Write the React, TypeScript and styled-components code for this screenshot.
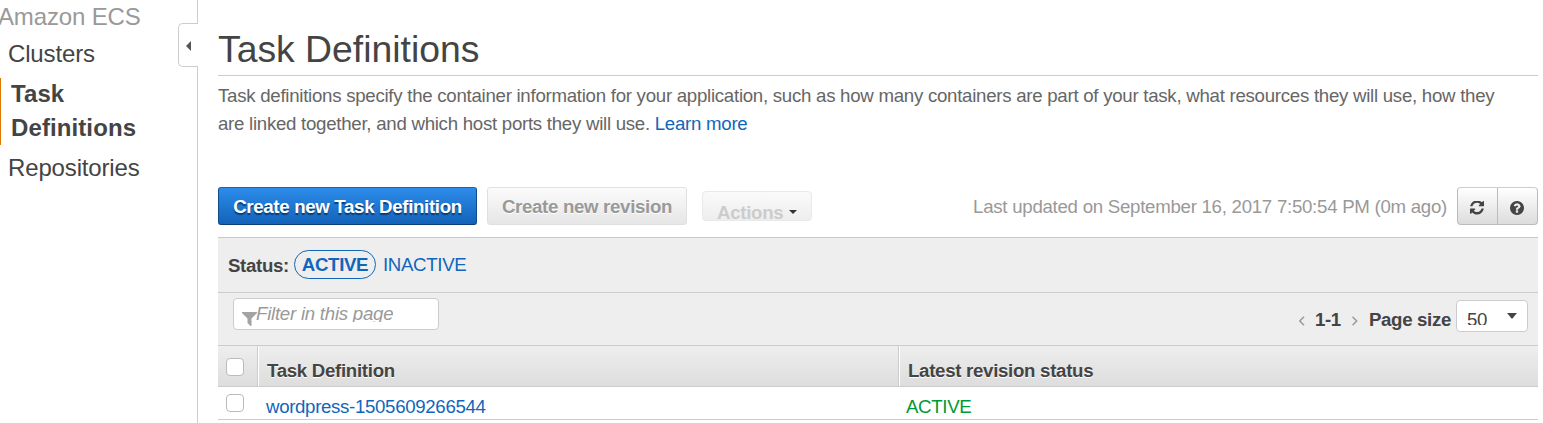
import React from "react";
import styled, { createGlobalStyle, css } from "styled-components";

const Global = createGlobalStyle`
  * { box-sizing: border-box; }
  html, body { margin: 0; background: #fff; overflow: hidden; }
  body {
    font-family: "Liberation Sans", Arial, sans-serif;
    font-size: 18.67px;
    letter-spacing: -0.33px;
    color: #444;
  }
`;

const Page = styled.div`
  display: flex;
  width: 1543px;
  height: 423px;
  overflow: hidden;
`;

const Sidebar = styled.nav`
  position: relative;
  flex: none;
  width: 198px;
  border-right: 1px solid #ccc;
  font-size: 24px;
  line-height: 34px;
  letter-spacing: -0.15px;
`;

const Service = styled.div`
  margin-left: -2px;
  color: #999;
  white-space: nowrap;
`;

const NavItem = styled.a<{ $active?: boolean }>`
  display: block;
  margin-top: 3px;
  padding-left: 8px;
  color: #444;
  ${(p) =>
    p.$active &&
    css`
      display: flow-root;
      width: 160px;
      margin: 7px 0 6px;
      height: 67px;
      padding-left: 10px;
      border-left: 1px solid #e07700;
      line-height: 34px;
      font-weight: bold;
      letter-spacing: 0.1px;
      span {
        display: block;
        margin-top: -1px;
      }
    `}
`;

const CollapseTab = styled.button`
  position: absolute;
  top: 23px;
  right: -1px;
  display: flex;
  align-items: center;
  width: 20px;
  height: 44px;
  padding: 2px 0 0 7px;
  border: 1px solid #ccc;
  border-right: 0;
  border-radius: 5px 0 0 5px;
  background: #fff;
`;

const Main = styled.main`
  flex: 1;
  min-width: 0;
  padding: 25px 5px 0 20px;
`;

const Title = styled.h1`
  margin: 0;
  height: 51px;
  border-bottom: 1px solid #ccc;
  font-size: 37.33px;
  font-weight: normal;
  letter-spacing: 0;
  line-height: 48px;
`;

const Description = styled.p`
  margin: 6px 0 0;
  max-width: 1295px;
  height: 105px;
  letter-spacing: -0.27px;
  line-height: 28px;
  color: #666;
`;

const Link = styled.a`
  color: #1166bb;
`;

const Toolbar = styled.div`
  display: flex;
  align-items: flex-start;
  height: 50px;
`;

const Button = styled.button<{ $primary?: boolean; $width: number }>`
  width: ${(p) => p.$width}px;
  height: 38px;
  margin-right: 10px;
  padding: 1px 0 0;
  border: 1px solid #e0e0e0;
  border-radius: 3px;
  background: linear-gradient(#fbfbfb, #e6e6e6);
  color: #999;
  font: bold 18.67px "Liberation Sans", Arial, sans-serif;
  letter-spacing: -0.32px;
  white-space: nowrap;
  text-shadow: 0 1px 0 #fff;
  ${(p) =>
    p.$primary &&
    css`
      border-color: #1a66b0 #0f4c8a #0b3f75;
      background: linear-gradient(#2d8ceb, #1263b8);
      color: #fff;
      text-shadow: 0 2px 1px #0a3d73;
    `}
`;

const ActionsButton = styled.button`
  display: flex;
  align-items: flex-start;
  gap: 6px;
  width: 110px;
  height: 30px;
  margin: 4px 0 0 5px;
  padding: 10px 0 0 14px;
  border: 1px solid #e9e9e9;
  border-radius: 4px;
  background: linear-gradient(#fafafa, #eee);
  color: #ccc;
  font: bold 18.67px/22px "Liberation Sans", Arial, sans-serif;
  letter-spacing: -0.3px;
`;

const Caret = styled.span`
  margin-top: 8px;
  border: 4px solid transparent;
  border-top-color: #333;
  border-bottom: 0;
`;

const Updated = styled.span`
  margin: 0 10px 0 auto;
  line-height: 39px;
  color: #999;
  letter-spacing: -0.27px;
  white-space: nowrap;
`;

const IconGroup = styled.div`
  display: flex;
  width: 81px;
  height: 38px;
  border: 1px solid #bbb;
  border-top-color: #ccc;
  border-radius: 4px;
  background: linear-gradient(#fff, #dcdcdc);
`;

const IconButton = styled.button`
  flex: 1;
  display: flex;
  align-items: center;
  justify-content: center;
  padding: 4px 1px 0 0;
  border: 0;
  background: none;
  & + & {
    border-left: 1px solid #bbb;
  }
`;

const StatusBar = styled.div`
  display: flex;
  height: 55px;
  padding: 12px 0 0 10px;
  border-top: 1px solid #c8c8c8;
  background: #eee;
  line-height: 29px;
`;

const StatusLabel = styled.b`
  width: 66px;
  padding-top: 1px;
`;

const ActivePill = styled.a`
  width: 82px;
  height: 29px;
  margin-right: 7px;
  border: 1px solid #1166bb;
  border-radius: 15px;
  color: #1166bb;
  font-weight: bold;
  line-height: 27px;
  text-align: center;
`;

const FilterBar = styled.div`
  display: flex;
  align-items: flex-start;
  height: 53px;
  padding: 5px 10px 0 15px;
  border-top: 1px solid #ccc;
  background: #eee;
`;

const FilterField = styled.div`
  display: flex;
  width: 206px;
  height: 32px;
  padding-left: 8px;
  border: 1px solid #ccc;
  border-radius: 4px;
  background: #fff;
  svg {
    flex: none;
    margin: 12px -1px 0 0;
  }
`;

const Placeholder = styled.span`
  height: 18px;
  margin-top: 5px;
  color: #999;
  font-style: italic;
  letter-spacing: -0.25px;
  line-height: 20px;
  overflow: hidden;
  white-space: nowrap;
`;

const Pager = styled.div`
  display: flex;
  align-items: flex-start;
  margin-left: auto;
  font-weight: bold;
  line-height: 43px;
  white-space: nowrap;
  svg {
    margin-top: 18px;
  }
`;

const PageRange = styled.span`
  margin: 0 11px 0 10px;
`;

const PageLabel = styled.span`
  margin: 0 5px 0 11px;
`;

const PageSelect = styled.div`
  display: flex;
  justify-content: space-between;
  width: 72px;
  height: 32px;
  margin-top: 2px;
  padding: 0 10px 0 10px;
  border: 1px solid #ccc;
  border-radius: 4px;
  background: #fff;
  font-weight: normal;
  svg {
    margin-top: 12px;
  }
`;

const PageValue = styled.span`
  height: 14px;
  margin-top: 10px;
  line-height: 18px;
  overflow: hidden;
`;

const Row = styled.div<{ $head?: boolean }>`
  display: grid;
  grid-template-columns: 39px 641px 1fr;
  grid-template-rows: 100%;
  height: 33px;
  border-bottom: 1px solid #ccc;
  ${(p) =>
    p.$head &&
    css`
      height: 42px;
      border-top: 1px solid #ccc;
      background: linear-gradient(#eee, #ddd);
      font-weight: bold;
      letter-spacing: -0.3px;
      text-shadow: 0 1px 0 #fff;
    `}
`;

const HeadCell = styled.div`
  padding: 14px 0 0 9px;
  border-left: 1px solid #ccc;
  box-shadow: inset 1px 0 0 #fff;
  line-height: 21px;
`;

const Cell = styled.div<{ $ok?: boolean }>`
  padding: 9px 0 0 ${(p) => (p.$ok ? 8 : 9)}px;
  line-height: 21px;
  color: ${(p) => (p.$ok ? "#009933" : "#1166bb")};
`;

const Check = styled.span<{ $top: number }>`
  width: 18px;
  height: 18px;
  margin: ${(p) => p.$top}px 0 0 8px;
  border: 1px solid #bbb;
  border-radius: 4px;
  background: #fff;
`;

const RefreshIcon = () => (
  <svg width="14" height="14" viewBox="0 64 1536 1536" fill="#444">
    <path d="M1511 928q0 5-1 7-64 268-268 434.5t-478 166.5q-146 0-282.5-55t-243.5-157l-129 129q-19 19-45 19t-45-19-19-45v-448q0-26 19-45t45-19h448q26 0 45 19t19 45-19 45l-137 137q71 66 161 102t187 36q134 0 250-65t186-179q11-17 53-117 8-23 30-23h192q13 0 22.5 9.5t9.5 22.5zm25-800v448q0 26-19 45t-45 19h-448q-26 0-45-19t-19-45 19-45l138-138q-148-137-349-137-134 0-250 65t-186 179q-11 17-53 117-8 23-30 23h-199q-13 0-22.5-9.5t-9.5-22.5v-7q65-268 270-434.5t480-166.5q146 0 284 55.5t245 156.5l130-129q19-19 45-19t45 19 19 45z" />
  </svg>
);

const HelpIcon = () => (
  <svg width="14" height="14" viewBox="128 128 1536 1536" fill="#444">
    <path d="M1024 1376v-192q0-14-9-23t-23-9h-192q-14 0-23 9t-9 23v192q0 14 9 23t23 9h192q14 0 23-9t9-23zm256-672q0-88-55.5-163t-138.5-116-170-41q-243 0-371 213-15 24 8 42l132 100q7 6 19 6 16 0 25-12 53-68 86-92 34-24 86-24 48 0 85.5 26t37.5 59q0 38-20 61t-68 45q-63 28-115.5 86.5t-52.5 125.5v36q0 14 9 23t23 9h192q14 0 23-9t9-23q0-19 21.5-49.5t54.5-49.5q32-18 49-28.5t46-35 44.5-48 28-60.5 12.5-81zm384 192q0 209-103 385.5t-279.5 279.5-385.5 103-385.5-103-279.5-279.5-103-385.5 103-385.5 279.5-279.5 385.5-103 385.5 103 279.5 279.5 103 385.5z" />
  </svg>
);

const FilterIcon = () => (
  <svg width="15" height="16" viewBox="0 0 15 16" fill="#a3a3a3">
    <path d="M0 1h15v1L9.5 7.5V15H8.5L5.5 12V7.5L0 2z" />
  </svg>
);

const Chevron = ({ next }: { next?: boolean }) => (
  <svg width="6" height="10" viewBox="0 0 6 10" fill="none" stroke="#999" strokeWidth="1.5">
    <path d={next ? "M.5.8 4.7 5 .5 9.2" : "M5 .8.8 5 5 9.2"} />
  </svg>
);

export default function App() {
  return (
    <>
      <Global />
      <Page>
        <Sidebar>
          <Service>Amazon ECS</Service>
          <NavItem>Clusters</NavItem>
          <NavItem $active>
            <span>Task Definitions</span>
          </NavItem>
          <NavItem>Repositories</NavItem>
          <CollapseTab aria-label="Collapse">
            <svg width="5" height="10" viewBox="0 0 5 10" fill="#555">
              <path d="M5 0v10L0 5z" />
            </svg>
          </CollapseTab>
        </Sidebar>
        <Main>
          <Title>Task Definitions</Title>
          <Description>
            Task definitions specify the container information for your application, such as how many
            containers are part of your task, what resources they will use, how they are linked together,
            and which host ports they will use. <Link>Learn more</Link>
          </Description>
          <Toolbar>
            <Button $primary $width={259}>Create new Task Definition</Button>
            <Button $width={200}>Create new revision</Button>
            <ActionsButton>
              Actions <Caret />
            </ActionsButton>
            <Updated>Last updated on September 16, 2017 7:50:54 PM (0m ago)</Updated>
            <IconGroup>
              <IconButton aria-label="Refresh"><RefreshIcon /></IconButton>
              <IconButton aria-label="Help"><HelpIcon /></IconButton>
            </IconGroup>
          </Toolbar>
          <StatusBar>
            <StatusLabel>Status:</StatusLabel>
            <ActivePill>ACTIVE</ActivePill>
            <Link>INACTIVE</Link>
          </StatusBar>
          <FilterBar>
            <FilterField>
              <FilterIcon />
              <Placeholder>Filter in this page</Placeholder>
            </FilterField>
            <Pager>
              <Chevron />
              <PageRange>1-1</PageRange>
              <Chevron next />
              <PageLabel>Page size</PageLabel>
              <PageSelect>
                <PageValue>50</PageValue>
                <svg width="10" height="6" viewBox="0 0 10 6" fill="#444">
                  <path d="M0 0h10L5 6z" />
                </svg>
              </PageSelect>
            </Pager>
          </FilterBar>
          <Row $head>
            <Check $top={12} />
            <HeadCell>Task Definition</HeadCell>
            <HeadCell>Latest revision status</HeadCell>
          </Row>
          <Row>
            <Check $top={7} />
            <Cell>wordpress-1505609266544</Cell>
            <Cell $ok>ACTIVE</Cell>
          </Row>
        </Main>
      </Page>
    </>
  );
}
